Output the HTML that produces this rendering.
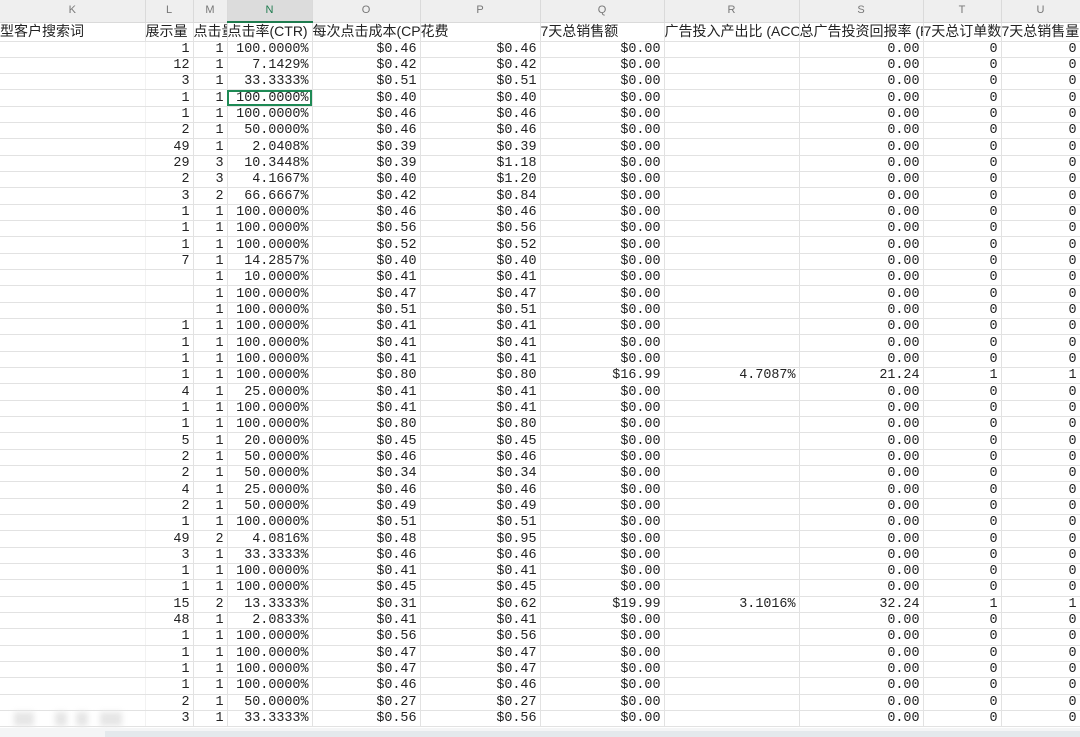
<!DOCTYPE html>
<html><head><meta charset="utf-8">
<style>
body{margin:0;width:1080px;height:737px;overflow:hidden;background:#fff;position:relative;}
table{border-collapse:collapse;table-layout:fixed;position:absolute;left:0;top:0;width:1080px;}
tr{height:16.34px;}
td{border-right:1px solid #e2e2e2;border-bottom:1px solid #e2e2e2;padding:0 3px 0 0;line-height:15px;font-family:"Liberation Mono","Noto Sans CJK SC",monospace;font-size:13.4px;color:#222;text-align:right;white-space:nowrap;overflow:hidden;}
tr.cl{height:22px;}
tr.cl td{background:#efefef;color:#777;font-family:"Liberation Sans",sans-serif;font-size:11px;text-align:center;padding:0;border-right:1px solid #dadada;border-bottom:1px solid #dadada;}
tr.cl td.sel{background:#dcdcdc;color:#1e7b4e;border-bottom:2px solid #1e7b4e;}
tr.hd{height:19px;}
tr.hd td{font-family:"Liberation Sans","Noto Sans CJK SC",sans-serif;font-size:14px;text-align:left;padding:0;color:#222;overflow:hidden;}
td.k{border-right:1px solid #f2f2f2;}
.s{outline:2px solid #1e8a55;outline-offset:-2px;}
.bot{position:absolute;left:0;top:728px;width:1080px;height:9px;background:#f4f5f6;}
.bar{position:absolute;left:105px;top:731px;width:975px;height:6px;background:#e4e9ec;}
.blur{position:absolute;top:712px;height:14px;background:#e6e6e6;filter:blur(3px);}
</style></head><body>
<table>
<colgroup><col style="width:145px"><col style="width:48px"><col style="width:34px"><col style="width:85px"><col style="width:108px"><col style="width:120px"><col style="width:124px"><col style="width:135px"><col style="width:124px"><col style="width:78px"><col style="width:79px"></colgroup>
<tr class="cl"><td>K</td><td>L</td><td>M</td><td class="sel">N</td><td>O</td><td>P</td><td>Q</td><td>R</td><td>S</td><td>T</td><td>U</td></tr>
<tr class="hd"><td>型客户搜索词</td><td>展示量</td><td>点击量</td><td>点击率(CTR)</td><td>每次点击成本(CPC)</td><td>花费</td><td>7天总销售额</td><td>广告投入产出比 (ACOS)</td><td>总广告投资回报率 (ROAS)</td><td>7天总订单数</td><td>7天总销售量</td></tr>
<tr><td class="k"></td><td>1</td><td>1</td><td>100.0000%</td><td>$0.46</td><td>$0.46</td><td>$0.00</td><td></td><td>0.00</td><td>0</td><td>0</td></tr>
<tr><td class="k"></td><td>12</td><td>1</td><td>7.1429%</td><td>$0.42</td><td>$0.42</td><td>$0.00</td><td></td><td>0.00</td><td>0</td><td>0</td></tr>
<tr><td class="k"></td><td>3</td><td>1</td><td>33.3333%</td><td>$0.51</td><td>$0.51</td><td>$0.00</td><td></td><td>0.00</td><td>0</td><td>0</td></tr>
<tr><td class="k"></td><td>1</td><td>1</td><td class="s">100.0000%</td><td>$0.40</td><td>$0.40</td><td>$0.00</td><td></td><td>0.00</td><td>0</td><td>0</td></tr>
<tr><td class="k"></td><td>1</td><td>1</td><td>100.0000%</td><td>$0.46</td><td>$0.46</td><td>$0.00</td><td></td><td>0.00</td><td>0</td><td>0</td></tr>
<tr><td class="k"></td><td>2</td><td>1</td><td>50.0000%</td><td>$0.46</td><td>$0.46</td><td>$0.00</td><td></td><td>0.00</td><td>0</td><td>0</td></tr>
<tr><td class="k"></td><td>49</td><td>1</td><td>2.0408%</td><td>$0.39</td><td>$0.39</td><td>$0.00</td><td></td><td>0.00</td><td>0</td><td>0</td></tr>
<tr><td class="k"></td><td>29</td><td>3</td><td>10.3448%</td><td>$0.39</td><td>$1.18</td><td>$0.00</td><td></td><td>0.00</td><td>0</td><td>0</td></tr>
<tr><td class="k"></td><td>2</td><td>3</td><td>4.1667%</td><td>$0.40</td><td>$1.20</td><td>$0.00</td><td></td><td>0.00</td><td>0</td><td>0</td></tr>
<tr><td class="k"></td><td>3</td><td>2</td><td>66.6667%</td><td>$0.42</td><td>$0.84</td><td>$0.00</td><td></td><td>0.00</td><td>0</td><td>0</td></tr>
<tr><td class="k"></td><td>1</td><td>1</td><td>100.0000%</td><td>$0.46</td><td>$0.46</td><td>$0.00</td><td></td><td>0.00</td><td>0</td><td>0</td></tr>
<tr><td class="k"></td><td>1</td><td>1</td><td>100.0000%</td><td>$0.56</td><td>$0.56</td><td>$0.00</td><td></td><td>0.00</td><td>0</td><td>0</td></tr>
<tr><td class="k"></td><td>1</td><td>1</td><td>100.0000%</td><td>$0.52</td><td>$0.52</td><td>$0.00</td><td></td><td>0.00</td><td>0</td><td>0</td></tr>
<tr><td class="k"></td><td>7</td><td>1</td><td>14.2857%</td><td>$0.40</td><td>$0.40</td><td>$0.00</td><td></td><td>0.00</td><td>0</td><td>0</td></tr>
<tr><td class="k"></td><td></td><td>1</td><td>10.0000%</td><td>$0.41</td><td>$0.41</td><td>$0.00</td><td></td><td>0.00</td><td>0</td><td>0</td></tr>
<tr><td class="k"></td><td></td><td>1</td><td>100.0000%</td><td>$0.47</td><td>$0.47</td><td>$0.00</td><td></td><td>0.00</td><td>0</td><td>0</td></tr>
<tr><td class="k"></td><td></td><td>1</td><td>100.0000%</td><td>$0.51</td><td>$0.51</td><td>$0.00</td><td></td><td>0.00</td><td>0</td><td>0</td></tr>
<tr><td class="k"></td><td>1</td><td>1</td><td>100.0000%</td><td>$0.41</td><td>$0.41</td><td>$0.00</td><td></td><td>0.00</td><td>0</td><td>0</td></tr>
<tr><td class="k"></td><td>1</td><td>1</td><td>100.0000%</td><td>$0.41</td><td>$0.41</td><td>$0.00</td><td></td><td>0.00</td><td>0</td><td>0</td></tr>
<tr><td class="k"></td><td>1</td><td>1</td><td>100.0000%</td><td>$0.41</td><td>$0.41</td><td>$0.00</td><td></td><td>0.00</td><td>0</td><td>0</td></tr>
<tr><td class="k"></td><td>1</td><td>1</td><td>100.0000%</td><td>$0.80</td><td>$0.80</td><td>$16.99</td><td>4.7087%</td><td>21.24</td><td>1</td><td>1</td></tr>
<tr><td class="k"></td><td>4</td><td>1</td><td>25.0000%</td><td>$0.41</td><td>$0.41</td><td>$0.00</td><td></td><td>0.00</td><td>0</td><td>0</td></tr>
<tr><td class="k"></td><td>1</td><td>1</td><td>100.0000%</td><td>$0.41</td><td>$0.41</td><td>$0.00</td><td></td><td>0.00</td><td>0</td><td>0</td></tr>
<tr><td class="k"></td><td>1</td><td>1</td><td>100.0000%</td><td>$0.80</td><td>$0.80</td><td>$0.00</td><td></td><td>0.00</td><td>0</td><td>0</td></tr>
<tr><td class="k"></td><td>5</td><td>1</td><td>20.0000%</td><td>$0.45</td><td>$0.45</td><td>$0.00</td><td></td><td>0.00</td><td>0</td><td>0</td></tr>
<tr><td class="k"></td><td>2</td><td>1</td><td>50.0000%</td><td>$0.46</td><td>$0.46</td><td>$0.00</td><td></td><td>0.00</td><td>0</td><td>0</td></tr>
<tr><td class="k"></td><td>2</td><td>1</td><td>50.0000%</td><td>$0.34</td><td>$0.34</td><td>$0.00</td><td></td><td>0.00</td><td>0</td><td>0</td></tr>
<tr><td class="k"></td><td>4</td><td>1</td><td>25.0000%</td><td>$0.46</td><td>$0.46</td><td>$0.00</td><td></td><td>0.00</td><td>0</td><td>0</td></tr>
<tr><td class="k"></td><td>2</td><td>1</td><td>50.0000%</td><td>$0.49</td><td>$0.49</td><td>$0.00</td><td></td><td>0.00</td><td>0</td><td>0</td></tr>
<tr><td class="k"></td><td>1</td><td>1</td><td>100.0000%</td><td>$0.51</td><td>$0.51</td><td>$0.00</td><td></td><td>0.00</td><td>0</td><td>0</td></tr>
<tr><td class="k"></td><td>49</td><td>2</td><td>4.0816%</td><td>$0.48</td><td>$0.95</td><td>$0.00</td><td></td><td>0.00</td><td>0</td><td>0</td></tr>
<tr><td class="k"></td><td>3</td><td>1</td><td>33.3333%</td><td>$0.46</td><td>$0.46</td><td>$0.00</td><td></td><td>0.00</td><td>0</td><td>0</td></tr>
<tr><td class="k"></td><td>1</td><td>1</td><td>100.0000%</td><td>$0.41</td><td>$0.41</td><td>$0.00</td><td></td><td>0.00</td><td>0</td><td>0</td></tr>
<tr><td class="k"></td><td>1</td><td>1</td><td>100.0000%</td><td>$0.45</td><td>$0.45</td><td>$0.00</td><td></td><td>0.00</td><td>0</td><td>0</td></tr>
<tr><td class="k"></td><td>15</td><td>2</td><td>13.3333%</td><td>$0.31</td><td>$0.62</td><td>$19.99</td><td>3.1016%</td><td>32.24</td><td>1</td><td>1</td></tr>
<tr><td class="k"></td><td>48</td><td>1</td><td>2.0833%</td><td>$0.41</td><td>$0.41</td><td>$0.00</td><td></td><td>0.00</td><td>0</td><td>0</td></tr>
<tr><td class="k"></td><td>1</td><td>1</td><td>100.0000%</td><td>$0.56</td><td>$0.56</td><td>$0.00</td><td></td><td>0.00</td><td>0</td><td>0</td></tr>
<tr><td class="k"></td><td>1</td><td>1</td><td>100.0000%</td><td>$0.47</td><td>$0.47</td><td>$0.00</td><td></td><td>0.00</td><td>0</td><td>0</td></tr>
<tr><td class="k"></td><td>1</td><td>1</td><td>100.0000%</td><td>$0.47</td><td>$0.47</td><td>$0.00</td><td></td><td>0.00</td><td>0</td><td>0</td></tr>
<tr><td class="k"></td><td>1</td><td>1</td><td>100.0000%</td><td>$0.46</td><td>$0.46</td><td>$0.00</td><td></td><td>0.00</td><td>0</td><td>0</td></tr>
<tr><td class="k"></td><td>2</td><td>1</td><td>50.0000%</td><td>$0.27</td><td>$0.27</td><td>$0.00</td><td></td><td>0.00</td><td>0</td><td>0</td></tr>
<tr><td class="k"></td><td>3</td><td>1</td><td>33.3333%</td><td>$0.56</td><td>$0.56</td><td>$0.00</td><td></td><td>0.00</td><td>0</td><td>0</td></tr>
</table>
<div class="blur" style="left:14px;width:20px"></div>
<div class="blur" style="left:55px;width:12px"></div>
<div class="blur" style="left:76px;width:12px"></div>
<div class="blur" style="left:100px;width:22px"></div>
<div class="bot"></div><div class="bar"></div>
</body></html>
